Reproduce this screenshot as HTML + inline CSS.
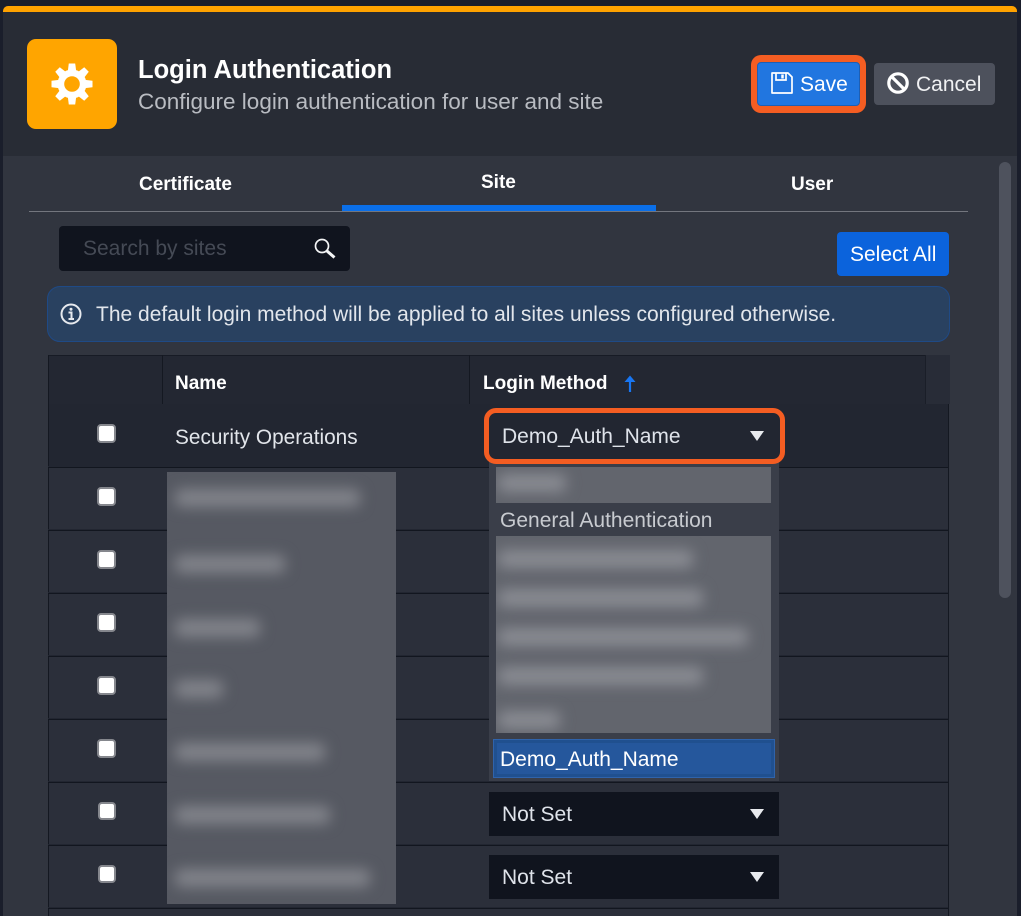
<!DOCTYPE html>
<html><head><meta charset="utf-8"><style>
*{box-sizing:border-box}
html,body{margin:0;padding:0;width:1021px;height:916px;overflow:hidden;background:#1a1e2b;font-family:"Liberation Sans",sans-serif}
.a{position:absolute}
.t{position:absolute;white-space:nowrap;line-height:30px;height:30px}
.line{position:absolute;left:48px;width:900px;height:1px;background:#12161f;box-shadow:0 -1px 0 #222631}
.cb{position:absolute;width:19px;height:19px;left:97px;background:#fff;border:2px solid #85878d;border-radius:4px}
.bl{position:absolute;height:18px;background:#82848b;filter:blur(7px);border-radius:6px}
.bd{background:#8a8c93}
.arrow{position:absolute;width:0;height:0;border-left:7px solid transparent;border-right:7px solid transparent;border-top:10px solid #e8eaee}
.sel{position:absolute;left:489px;width:290px;height:44px;background:#10141e}
</style></head><body>
<div class="a" style="left:3px;top:6px;width:1014px;height:910px;background:#31353f;border-radius:5px 5px 0 0;overflow:hidden">
<div class="a" style="left:0;top:0;width:1014px;height:6px;background:#ffa200"></div>
<div class="a" style="left:0;top:6px;width:1014px;height:144px;background:#282c35"></div>
</div>

<div class="a" style="left:27px;top:39px;width:90px;height:90px;background:#ffa500;border-radius:9px"></div>
<svg class="a" style="left:51px;top:63px" width="42" height="42" viewBox="-21 -21 42 42">
<g fill="#fff"><path d="M-4.300-12L-3.200-20.500H3.200L4.300-12Z"/><path d="M-4.300-12L-3.200-20.500H3.200L4.300-12Z" transform="rotate(45)"/><path d="M-4.300-12L-3.200-20.500H3.200L4.300-12Z" transform="rotate(90)"/><path d="M-4.300-12L-3.200-20.500H3.200L4.300-12Z" transform="rotate(135)"/><path d="M-4.300-12L-3.200-20.500H3.200L4.300-12Z" transform="rotate(180)"/><path d="M-4.300-12L-3.200-20.500H3.200L4.300-12Z" transform="rotate(225)"/><path d="M-4.300-12L-3.200-20.500H3.200L4.300-12Z" transform="rotate(270)"/><path d="M-4.300-12L-3.200-20.500H3.200L4.300-12Z" transform="rotate(315)"/><circle r="14.500"/></g><circle r="7.800" fill="#ffa500"/></svg>
<div class="t" style="left:138px;top:55px;font-size:25.500px;font-weight:bold;color:#fff">Login Authentication</div>
<div class="t" style="left:138px;top:87px;font-size:22.500px;color:#b9bcc2">Configure login authentication for user and site</div>

<div class="a" style="left:751px;top:55px;width:115px;height:58px;border-radius:10px;background:#f45d22"></div>
<div class="a" style="left:757px;top:62px;width:103px;height:44px;border-radius:4px;background:#2176e0;border:1px solid #1d5fb5"></div>
<svg class="a" style="left:770px;top:71px" width="24" height="24" viewBox="0 0 24 24" fill="none" stroke="#fff" stroke-width="1.700"><path d="M2 2h16l4 4v16H2z" stroke-linejoin="round"/><path d="M6 2v7h10V2"/><path d="M12.500 3.500v4" stroke-width="2.500"/></svg>
<div class="t" style="left:800px;top:70px;font-size:21px;color:#fff">Save</div>
<div class="a" style="left:874px;top:63px;width:121px;height:42px;border-radius:4px;background:#4d515c"></div>
<svg class="a" style="left:887px;top:72px" width="22" height="22" viewBox="0 0 22 22" fill="none" stroke="#fff" stroke-width="3.200"><circle cx="11" cy="11" r="9.200"/><path d="M4.500 4.500l13 13"/></svg>
<div class="t" style="left:916px;top:70px;font-size:21px;color:#f0f1f3">Cancel</div>

<div class="a" style="left:29px;top:211px;width:939px;height:1px;background:#73767e"></div>
<div class="a" style="left:342px;top:205px;width:314px;height:6px;background:#0b6fe8"></div>
<div class="t" style="left:139px;top:170px;font-size:19px;font-weight:bold;color:#fff">Certificate</div>
<div class="t" style="left:481px;top:168px;font-size:19px;font-weight:bold;color:#fff">Site</div>
<div class="t" style="left:791px;top:170px;font-size:19px;font-weight:bold;color:#fff">User</div>
<div class="a" style="left:999px;top:162px;width:12px;height:436px;background:#4e525d;border-radius:6px"></div>

<div class="a" style="left:59px;top:226px;width:291px;height:45px;background:#10141e;border-radius:4px"></div>
<div class="t" style="left:83px;top:234px;font-size:21px;color:#454a55">Search by sites</div>
<svg class="a" style="left:313px;top:236px" width="24" height="24" viewBox="0 0 24 24" fill="none" stroke="#f4f5f6"><circle cx="9" cy="10" r="6.500" stroke-width="1.700"/><path d="M14 15l7.500 6.500" stroke-width="3"/></svg>
<div class="a" style="left:837px;top:232px;width:112px;height:44px;background:#0b63dc;border-radius:4px"></div>
<div class="t" style="left:850px;top:240px;font-size:21px;color:#fff">Select All</div>

<div class="a" style="left:47px;top:286px;width:903px;height:56px;background:#294160;border:1px solid #1f4a86;border-radius:13px"></div>
<svg class="a" style="left:60px;top:303px" width="22" height="22" viewBox="0 0 22 22" fill="none" stroke="#e6e9ee"><circle cx="11" cy="11" r="9.500" stroke-width="2"/><path d="M8.500 9.500H11.500V15.500M8.500 16H14" stroke-width="2"/><circle cx="11" cy="6.300" r="1.500" fill="#e6e9ee" stroke="none"/></svg>
<div class="t" style="left:96px;top:300px;font-size:21px;color:#e2e6ec">The default login method will be applied to all sites unless configured otherwise.</div>

<div class="a" style="left:48px;top:355px;width:902px;height:561px;background:#2b2f3a"></div>
<div class="a" style="left:48px;top:355px;width:878px;height:49px;background:#232732;border-top:1px solid #171b25"></div>
<div class="a" style="left:926px;top:355px;width:24px;height:49px;background:#282c37"></div>
<div class="a" style="left:162px;top:355px;width:1px;height:49px;background:#141821"></div>
<div class="a" style="left:469px;top:355px;width:1px;height:49px;background:#141821"></div>
<div class="a" style="left:925px;top:355px;width:1px;height:49px;background:#1a1e28"></div>
<div class="a" style="left:48px;top:404px;width:900px;height:63px;background:#222631"></div>
<div class="a" style="left:48px;top:355px;width:1px;height:561px;background:#141821"></div>
<div class="a" style="left:948px;top:404px;width:1px;height:512px;background:#141821"></div>
<div class="a" style="left:949px;top:404px;width:1px;height:512px;background:#31353f"></div>
<div class="t" style="left:175px;top:369px;font-size:19px;font-weight:bold;color:#fff">Name</div>
<div class="t" style="left:483px;top:369px;font-size:19px;font-weight:bold;color:#fff">Login Method</div>
<svg class="a" style="left:623px;top:375px" width="14" height="17" viewBox="0 0 14 17"><path d="M7 17V4" stroke="#1876f2" stroke-width="2.200"/><path d="M7 0.500L12.500 7H1.500Z" fill="#1876f2"/></svg>

<div class="line" style="top:467px"></div><div class="line" style="top:530px"></div><div class="line" style="top:593px"></div><div class="line" style="top:656px"></div><div class="line" style="top:719px"></div><div class="line" style="top:782px"></div><div class="line" style="top:845px"></div><div class="line" style="top:908px"></div>

<div class="cb" style="top:424px"></div><div class="cb" style="top:487px"></div><div class="cb" style="top:550px"></div><div class="cb" style="top:613px"></div><div class="cb" style="top:676px"></div><div class="cb" style="top:739px"></div>
<div class="cb" style="top:802px;left:98px;width:18px;height:18px"></div><div class="cb" style="top:865px;left:98px;width:18px;height:18px"></div>

<div class="t" style="left:175px;top:423px;font-size:20.800px;color:#e2e5ea">Security Operations</div>

<div class="a" style="left:167px;top:472px;width:229px;height:432px;background:#565962;overflow:hidden">
<div class="bl" style="left:8px;top:17px;width:185px"></div>
<div class="bl" style="left:8px;top:83px;width:110px"></div>
<div class="bl" style="left:8px;top:147px;width:85px"></div>
<div class="bl" style="left:8px;top:208px;width:48px"></div>
<div class="bl" style="left:8px;top:271px;width:150px"></div>
<div class="bl" style="left:8px;top:334px;width:155px"></div>
<div class="bl" style="left:8px;top:397px;width:195px"></div>
</div>

<div class="a" style="left:489px;top:460px;width:290px;height:321px;background:#3a3e49"></div>
<div class="a" style="left:496px;top:467px;width:275px;height:36px;background:#62656d;overflow:hidden"><div class="bl bd" style="left:2px;top:7px;width:68px"></div></div>
<div class="t" style="left:500px;top:506px;font-size:21px;color:#c8cbd0">General Authentication</div>
<div class="a" style="left:496px;top:536px;width:275px;height:197px;background:#62656d;overflow:hidden">
<div class="bl bd" style="left:2px;top:14px;width:195px"></div>
<div class="bl bd" style="left:2px;top:53px;width:205px"></div>
<div class="bl bd" style="left:2px;top:92px;width:250px"></div>
<div class="bl bd" style="left:2px;top:131px;width:205px"></div>
<div class="bl bd" style="left:2px;top:175px;width:62px"></div>
</div>
<div class="a" style="left:493px;top:739px;width:282px;height:39px;background:#25579c;border:1px solid #2f63ab;outline:3px solid #20508f;outline-offset:-4px"></div>
<div class="t" style="left:500px;top:745px;font-size:21px;color:#fff">Demo_Auth_Name</div>

<div class="a" style="left:484px;top:408px;width:301px;height:56px;background:#222631;border:5px solid #f45d22;border-radius:12px"></div>
<div class="t" style="left:502px;top:422px;font-size:21px;color:#dfe3ea">Demo_Auth_Name</div>
<div class="arrow" style="left:750px;top:431px"></div>

<div class="sel" style="top:792px"></div>
<div class="t" style="left:502px;top:800px;font-size:21px;color:#dfe3ea">Not Set</div>
<div class="arrow" style="left:750px;top:809px"></div>
<div class="sel" style="top:855px"></div>
<div class="t" style="left:502px;top:863px;font-size:21px;color:#dfe3ea">Not Set</div>
<div class="arrow" style="left:750px;top:872px"></div>
</body></html>
